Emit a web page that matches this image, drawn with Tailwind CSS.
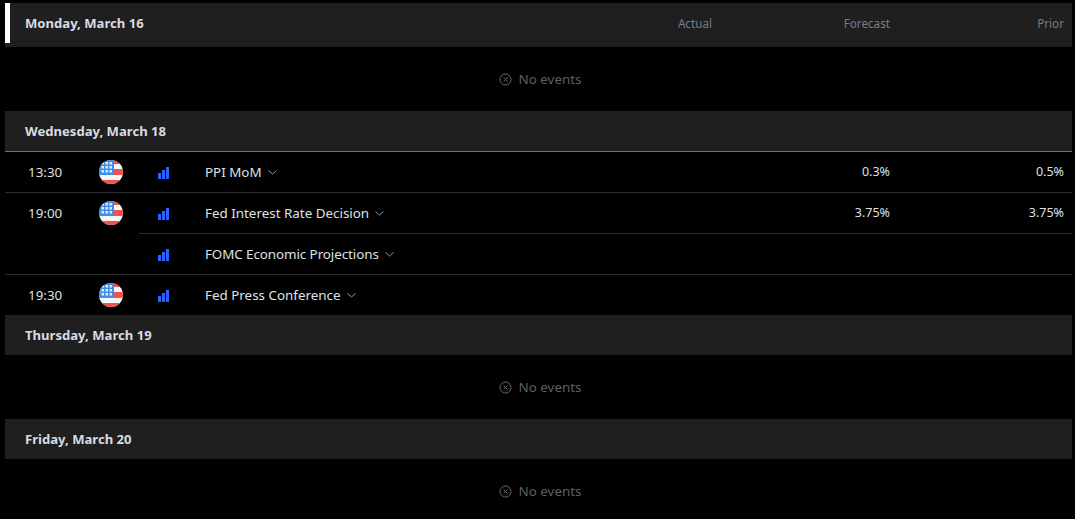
<!DOCTYPE html>
<html><head><meta charset="utf-8"><script src="https://cdn.jsdelivr.net/npm/@tailwindcss/browser@4"></script></head>
<body class="bg-black h-[519px] overflow-hidden font-['Noto_Sans',sans-serif] text-[13.4px] text-[#dfe1e6]">
<svg class="absolute w-0 h-0"><defs>
<symbol id="flag" viewBox="0 0 24 24"><rect width="24" height="24" fill="#f7f7f7"/><rect width="24" height="4" fill="#ef5350"/><rect y="9" width="24" height="6" fill="#ef5350"/><rect y="20" width="24" height="4" fill="#ef5350"/><rect width="15" height="15" fill="#3f8fe8"/><g fill="#dbeafe"><rect x="2.500" y="2" width="2.500" height="2.500"/><rect x="6.500" y="2" width="2.500" height="2.500"/><rect x="10.500" y="2" width="2.500" height="2.500"/><rect x="2.500" y="6" width="2.500" height="2.500"/><rect x="6.500" y="6" width="2.500" height="2.500"/><rect x="10.500" y="6" width="2.500" height="2.500"/><rect x="2.500" y="10" width="2.500" height="2.500"/><rect x="6.500" y="10" width="2.500" height="2.500"/><rect x="10.500" y="10" width="2.500" height="2.500"/></g></symbol>
<symbol id="bars" viewBox="0 0 11 12"><path fill="#2962ff" d="M0 6h3v6H0zM4 3h3v9H4zM8 0h3v12H8z"/></symbol>
<symbol id="chev" viewBox="0 0 9 5"><path d="M.5.500 4.500 4l4-3.500" fill="none" stroke="#9598a1" stroke-width="1"/></symbol>
<symbol id="x" viewBox="0 0 13 13"><circle cx="6.500" cy="6.500" r="5.500" fill="none" stroke="#6a6d78"/><path d="M4.500 4.500l4 4m0-4-4 4" stroke="#6a6d78" fill="none"/></symbol>
</defs></svg>
<main class="ml-[5px] mr-[3px] pt-[3px]">
<section>
<div class="flex h-[44px] bg-[#1f1f1f] relative">
<div class="absolute left-0 top-0 w-[5px] h-[40px] bg-white"></div>
<div class="pl-[20px] leading-[40px] font-bold text-[13.1px] text-[#d8dbe2] flex-1">Monday, March 16</div>
<div class="text-right leading-[40px] text-[#787b86] text-[11.7px]">Actual</div>
<div class="w-[178px] text-right leading-[40px] text-[#787b86] text-[11.7px]">Forecast</div>
<div class="w-[182px] pr-[8px] text-right leading-[40px] text-[#787b86] text-[11.7px]">Prior</div>
</div>
<div class="h-[64px] flex items-center justify-center gap-[7px] text-[#5c5f66] pt-[1px] pl-[3px]"><svg class="w-[13px] h-[13px]"><use href="#x"/></svg>No events</div>
</section>
<section>
<div class="h-[41px] bg-[#1f1f1f] border-b border-[#e0404a] pl-[20px] leading-[40px] font-bold text-[13.1px] text-[#d8dbe2]">Wednesday, March 18</div>
<div class="flex items-center h-[41px] border-b border-[#2e2e2e]">
<div class="w-[94px] pl-[23px] pt-[1px]">13:30</div><svg class="w-[24px] h-[24px] rounded-full"><use href="#flag"/></svg>
<svg class="w-[11px] h-[12px] ml-[35px] mt-[2px]"><use href="#bars"/></svg>
<div class="ml-[36px] flex-1 flex items-center gap-[6px] pt-[1px]">PPI MoM <svg class="w-[9px] h-[5px]"><use href="#chev"/></svg></div>
<div class="w-[100px] text-right pt-[1px] text-[12.5px]">0.3%</div><div class="w-[182px] pr-[8px] text-right pt-[1px] text-[12.5px]">0.5%</div>
</div>
<div class="flex h-[82px] border-b border-[#2e2e2e]">
<div class="w-[134px] h-[40px] flex items-center">
<div class="w-[94px] pl-[23px] pt-[1px]">19:00</div><svg class="w-[24px] h-[24px] rounded-full"><use href="#flag"/></svg>
</div>
<div class="flex-1">
<div class="flex items-center h-[41px] border-b border-[#2e2e2e]">
<svg class="w-[11px] h-[12px] ml-[19px] mt-[2px]"><use href="#bars"/></svg>
<div class="ml-[36px] flex-1 flex items-center gap-[6px] pt-[1px]">Fed Interest Rate Decision <svg class="w-[9px] h-[5px]"><use href="#chev"/></svg></div>
<div class="w-[100px] text-right pt-[1px] text-[12.5px]">3.75%</div><div class="w-[182px] pr-[8px] text-right pt-[1px] text-[12.5px]">3.75%</div>
</div>
<div class="flex items-center h-[40px]">
<svg class="w-[11px] h-[12px] ml-[19px] mt-[2px]"><use href="#bars"/></svg>
<div class="ml-[36px] flex-1 flex items-center gap-[6px] pt-[1px] tracking-[-0.08px]">FOMC Economic Projections <svg class="w-[9px] h-[5px]"><use href="#chev"/></svg></div>
</div>
</div>
</div>
<div class="flex items-center h-[40px]">
<div class="w-[94px] pl-[23px] pt-[1px]">19:30</div><svg class="w-[24px] h-[24px] rounded-full"><use href="#flag"/></svg>
<svg class="w-[11px] h-[12px] ml-[35px] mt-[2px]"><use href="#bars"/></svg>
<div class="ml-[36px] flex-1 flex items-center gap-[6px] pt-[1px]">Fed Press Conference <svg class="w-[9px] h-[5px]"><use href="#chev"/></svg></div>
</div>
</section>
<section>
<div class="h-[40px] bg-[#1f1f1f] pl-[20px] leading-[40px] font-bold text-[13.1px] text-[#d8dbe2]">Thursday, March 19</div>
<div class="h-[64px] flex items-center justify-center gap-[7px] text-[#5c5f66] pt-[1px] pl-[3px]"><svg class="w-[13px] h-[13px]"><use href="#x"/></svg>No events</div>
</section>
<section>
<div class="h-[40px] bg-[#1f1f1f] pl-[20px] leading-[40px] font-bold text-[13.1px] text-[#d8dbe2]">Friday, March 20</div>
<div class="h-[60px] flex items-center justify-center gap-[7px] text-[#5c5f66] pt-[5px] pl-[3px]"><svg class="w-[13px] h-[13px]"><use href="#x"/></svg>No events</div>
</section>
</main>
</body></html>
